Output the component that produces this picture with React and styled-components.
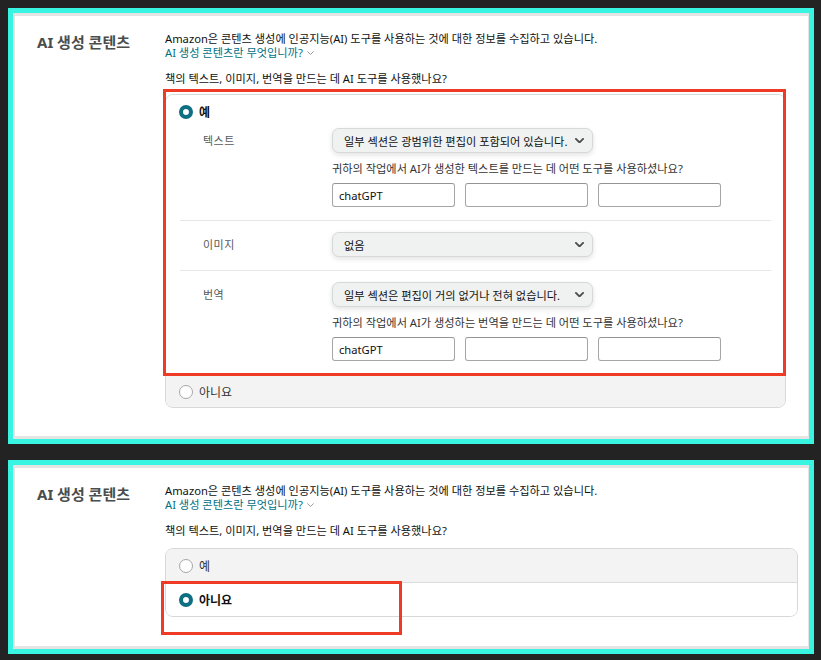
import React from "react";
import styled, { createGlobalStyle } from "styled-components";

const Global = createGlobalStyle`
  html, body { margin: 0; padding: 0; }
  body {
    background: #232323;
    padding: 8px;
    font-family: "Noto Sans", "Noto Sans CJK KR", sans-serif;
    color: #0f1111;
  }
  * { box-sizing: border-box; }
`;

const Page = styled.div`
  width: 806px;
  display: flex;
  flex-direction: column;
  gap: 16px;
`;

const Panel = styled.section`
  border: 5px solid #38f5e2;
  background: #fff;
`;

const PanelInner = styled.div`
  border-style: solid;
  border-color: #e4e4e4;
  border-width: 3px 1px 3px 2px;
  display: grid;
  grid-template-columns: 128px auto;
  padding: 16px 0 ${(p) => p.$pb}px 22px;
`;

const Title = styled.h2`
  margin: 1px 0 0;
  font-size: 15px;
  line-height: 18px;
  font-weight: 700;
  color: #4a4d4d;
`;

const Content = styled.div`
  display: flex;
  flex-direction: column;
`;

const Text = styled.p`
  margin: 0;
  font-size: 11.2px;
  line-height: 14px;
  color: #0f1111;
`;

const Question = styled(Text)`
  margin-top: 12px;
`;

const LinkLine = styled.div`
  display: flex;
  height: 14px;
  font-size: 11.2px;
  line-height: 14px;
`;

const Link = styled.a`
  display: inline-flex;
  align-items: center;
  gap: 4px;
  color: #007185;
  text-decoration: none;
  cursor: pointer;
`;

const CardWrap = styled.div`
  position: relative;
  margin-top: ${(p) => p.$mt}px;
  width: ${(p) => p.$width}px;
`;

const Card = styled.div`
  border: 1px solid #d5d9d9;
  border-radius: 8px;
  overflow: hidden;
  background: #fff;
`;

const Option = styled.div`
  background: ${(p) => (p.$muted ? "#f3f3f3" : "#fff")};
  & + & {
    border-top: 1px solid #d9dcdc;
  }
`;

const OptionHeader = styled.label`
  display: flex;
  align-items: center;
  gap: 6px;
  height: ${(p) => p.$h}px;
  padding: ${(p) => p.$pt || 0}px 14px 0 13px;
  font-size: 12px;
  font-weight: ${(p) => (p.$bold ? 700 : 400)};
  color: ${(p) => (p.$bold ? "#0f1111" : "#333")};
  cursor: pointer;
`;

const Radio = styled.span`
  flex: none;
  width: 14px;
  height: 14px;
  border-radius: 50%;
  background: #fff;
  border: ${(p) => (p.$checked ? "4.5px solid #0c6f82" : "1px solid #a6a6a6")};
`;

const Rows = styled.div`
  padding: 0 14px;
`;

const Row = styled.div`
  display: grid;
  grid-template-columns: 129px 1fr;
  align-items: start;
  padding: ${(p) => (p.$first ? "9px" : "11px")} 0 13px 23px;
  border-top: ${(p) => (p.$first ? "none" : "1px solid #e7e7e7")};
  &:last-child {
    padding-bottom: 14px;
  }
`;

const RowLabel = styled.span`
  font-size: 11px;
  line-height: 25px;
  color: #565959;
  letter-spacing: 0.5px;
`;

const Field = styled.div`
  display: flex;
  flex-direction: column;
`;

const Select = styled.div`
  width: 261px;
  height: 25px;
  display: flex;
  align-items: center;
  justify-content: space-between;
  padding: 0 8px 0 11px;
  background: #f0f2f2;
  border: 1px solid #d5d9d9;
  border-radius: 7px;
  box-shadow: 0 2px 5px rgba(15, 17, 17, 0.12);
  font-size: 11.2px;
  color: #0f1111;
`;

const SubQuestion = styled(Text)`
  margin-top: 9px;
  line-height: 14px;
  color: #333;
`;

const Inputs = styled.div`
  margin-top: 7px;
  display: grid;
  grid-template-columns: repeat(3, 123px);
  gap: 10px;
`;

const Input = styled.div`
  height: 24px;
  border: 1px solid #a6a6a6;
  border-top-color: #949494;
  border-radius: 3px;
  padding: 0 6px;
  display: flex;
  align-items: center;
  font-size: 11.2px;
  color: #0f1111;
  background: #fff;
`;

const Highlight = styled.div`
  position: absolute;
  left: ${(p) => p.$l}px;
  top: ${(p) => p.$t}px;
  width: ${(p) => p.$w}px;
  height: ${(p) => p.$h}px;
  border: 3px solid #ef3a26;
  pointer-events: none;
`;

const Chevron = ({ size = 9, color = "#4a4d4d", sw = 2 }) => (
  <svg width={size} height={size * 0.6} viewBox="0 0 10 6" fill="none">
    <polyline points="1,1 5,5 9,1" stroke={color} strokeWidth={sw} strokeLinecap="round" strokeLinejoin="round" />
  </svg>
);

const Dropdown = ({ value }) => (
  <Select>
    <span>{value}</span>
    <Chevron />
  </Select>
);

const ToolInputs = ({ first }) => (
  <Inputs>
    <Input>{first}</Input>
    <Input />
    <Input />
  </Inputs>
);

const Header = () => (
  <>
    <Text>Amazon은 콘텐츠 생성에 인공지능(AI) 도구를 사용하는 것에 대한 정보를 수집하고 있습니다.</Text>
    <LinkLine>
      <Link>
        AI 생성 콘텐츠란 무엇입니까?
        <Chevron size={7} color="#8d9096" sw={1.3} />
      </Link>
    </LinkLine>
    <Question>책의 텍스트, 이미지, 번역을 만드는 데 AI 도구를 사용했나요?</Question>
  </>
);

export default function App() {
  return (
    <>
      <Global />
      <Page>
        <Panel>
          <PanelInner $pb={28}>
            <Title>AI 생성 콘텐츠</Title>
            <Content>
              <Header />
              <CardWrap $width={621} $mt={8}>
                <Card>
                  <Option>
                    <OptionHeader $h={24} $pt={10} $bold>
                      <Radio $checked />예
                    </OptionHeader>
                    <Rows>
                      <Row $first>
                        <RowLabel>텍스트</RowLabel>
                        <Field>
                          <Dropdown value="일부 섹션은 광범위한 편집이 포함되어 있습니다." />
                          <SubQuestion>귀하의 작업에서 AI가 생성한 텍스트를 만드는 데 어떤 도구를 사용하셨나요?</SubQuestion>
                          <ToolInputs first="chatGPT" />
                        </Field>
                      </Row>
                      <Row>
                        <RowLabel>이미지</RowLabel>
                        <Field>
                          <Dropdown value="없음" />
                        </Field>
                      </Row>
                      <Row>
                        <RowLabel>번역</RowLabel>
                        <Field>
                          <Dropdown value="일부 섹션은 편집이 거의 없거나 전혀 없습니다." />
                          <SubQuestion>귀하의 작업에서 AI가 생성하는 번역을 만드는 데 어떤 도구를 사용하셨나요?</SubQuestion>
                          <ToolInputs first="chatGPT" />
                        </Field>
                      </Row>
                    </Rows>
                  </Option>
                  <Option $muted>
                    <OptionHeader $h={31}>
                      <Radio />아니요
                    </OptionHeader>
                  </Option>
                </Card>
                <Highlight $l={-2} $t={-5} $w={623} $h={287} />
              </CardWrap>
            </Content>
          </PanelInner>
        </Panel>

        <Panel>
          <PanelInner $pb={29}>
            <Title>AI 생성 콘텐츠</Title>
            <Content>
              <Header />
              <CardWrap $width={633} $mt={10}>
                <Card>
                  <Option $muted>
                    <OptionHeader $h={33}>
                      <Radio />예
                    </OptionHeader>
                  </Option>
                  <Option>
                    <OptionHeader $h={33} $bold>
                      <Radio $checked />아니요
                    </OptionHeader>
                  </Option>
                </Card>
                <Highlight $l={-4} $t={33} $w={241} $h={54} />
              </CardWrap>
            </Content>
          </PanelInner>
        </Panel>
      </Page>
    </>
  );
}
